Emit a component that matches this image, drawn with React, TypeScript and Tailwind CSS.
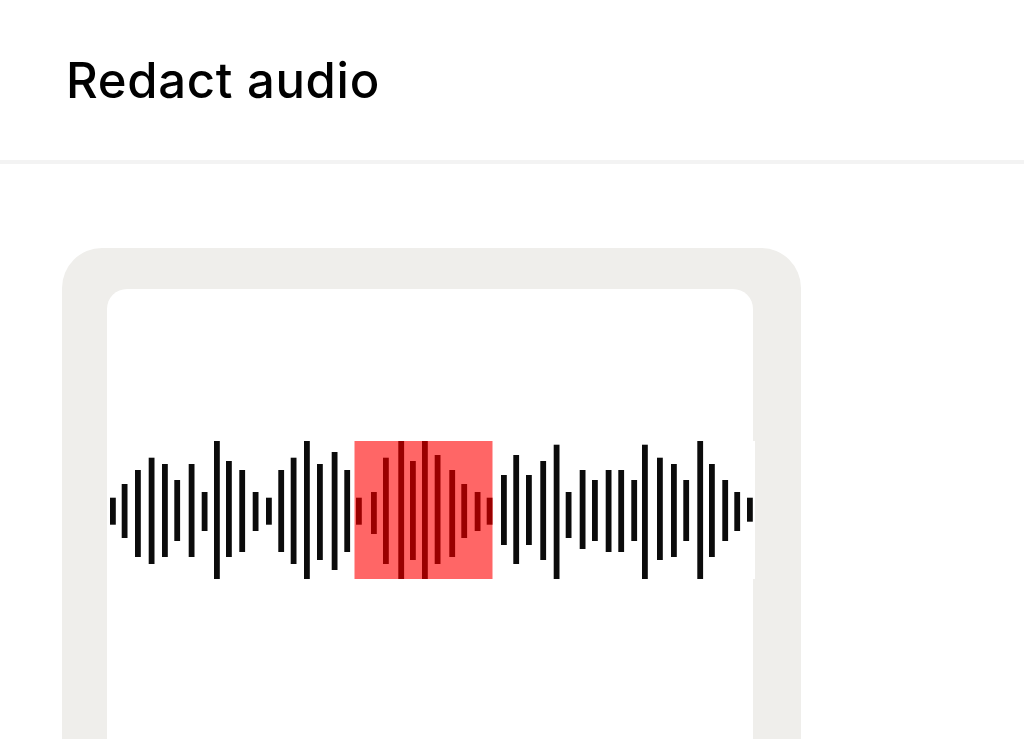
import React from 'react'

// [x, top, bottom] in page coordinates, shifted into the svg box below
const LEFT: [number, number, number][] = [
  [110, 497.7, 524.7], [121.7, 484, 538], [135, 470, 557], [148.7, 457.7, 564],
  [162, 464, 557], [174.3, 480, 541], [188.7, 464, 557], [201.7, 492, 531],
  [214, 441, 579], [226, 461, 557], [239.3, 470, 552], [252.7, 492, 531],
  [266, 497.7, 524.7], [278.3, 470, 552], [290.7, 457.7, 564], [304, 441, 579],
  [317, 464, 560], [331.7, 452, 570], [344.3, 470, 552],
]

const REDACTED: [number, number, number][] = [
  [356, 497.7, 524.7], [371, 492, 534], [383, 457.7, 564], [398.3, 441, 579],
  [410, 461, 560], [422, 441, 579], [434.7, 455, 564], [449.3, 470, 557],
  [461.3, 484, 538], [474.7, 492, 531], [486.7, 497.7, 524.7],
]

const RIGHT: [number, number, number][] = [
  [501, 475, 545], [513.3, 455, 564], [526, 475, 545], [540.3, 461, 560],
  [553.7, 444.7, 579], [565.7, 492, 538], [579.7, 470, 549], [592, 480, 541],
  [605.7, 470, 552], [618.3, 470, 552], [631.3, 480, 541], [642, 444.7, 579],
  [657, 457.7, 560], [671, 464, 557], [683.3, 480, 541], [697.3, 441, 579],
  [709, 464, 557], [722.3, 480, 541], [734.3, 492, 531], [747, 497.7, 521.7],
]

const OX = 107
const OY = 441

function Bars({ bars, fill }: { bars: [number, number, number][]; fill: string }) {
  return (
    <>
      {bars.map(([x, t, b], i) => (
        <rect key={i} x={x - OX} y={t - OY} width={5.8} height={b - t} fill={fill} />
      ))}
    </>
  )
}

function Waveform() {
  return (
    <svg width="648" height="138" viewBox="0 0 648 138" className="block">
      <rect x="0" y="0" width="648" height="138" fill="#ffffff" />
      <rect x={354.5 - OX} y="0" width="138" height="138" fill="#ff6666" />
      <Bars bars={LEFT} fill="#0b0b0b" />
      <Bars bars={REDACTED} fill="#990000" />
      <Bars bars={RIGHT} fill="#0b0b0b" />
    </svg>
  )
}

export default function App() {
  return (
    <div
      className="w-[1024px] h-[739px] overflow-hidden bg-white"
      style={{ fontFamily: 'Inter, "Noto Sans", sans-serif' }}
    >
      <header className="h-[164px] border-b-4 border-[#f3f3f3] flex items-start pl-[66px] pt-[51px]">
        <h1 className="text-[49px] leading-[60px] font-medium text-black tracking-[0.7px]">Redact audio</h1>
      </header>
      <div className="pl-[62px] pt-[84px]">
        <div className="w-[739px] h-[600px] bg-[#efeeeb] rounded-t-[40px] pl-[45px] pr-[48px] pt-[41px]">
          <div className="h-full bg-white rounded-t-[20px] pt-[152px]">
            <Waveform />
          </div>
        </div>
      </div>
    </div>
  )
}
